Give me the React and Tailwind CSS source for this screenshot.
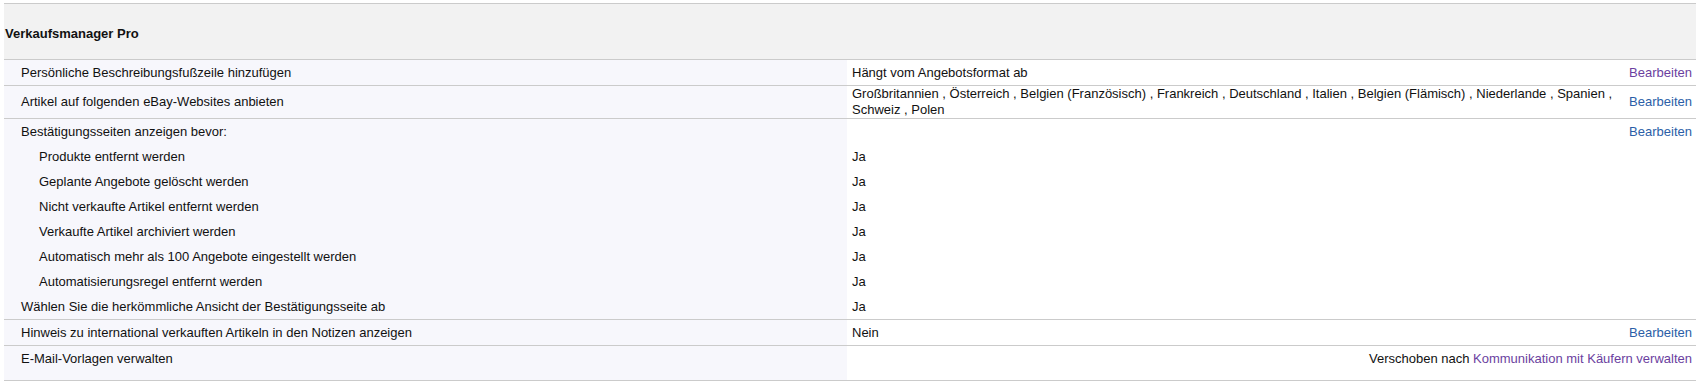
const siteList =
  "Großbritannien , Österreich , Belgien (Französisch) , Frankreich , Deutschland , Italien , Belgien (Flämisch) , Niederlande , Spanien , Schweiz , Polen"

const confirmRows = [
  { label: "Bestätigungsseiten anzeigen bevor:", value: "", edit: true },
  { label: "Produkte entfernt werden", value: "Ja", sub: true },
  { label: "Geplante Angebote gelöscht werden", value: "Ja", sub: true },
  { label: "Nicht verkaufte Artikel entfernt werden", value: "Ja", sub: true },
  { label: "Verkaufte Artikel archiviert werden", value: "Ja", sub: true },
  { label: "Automatisch mehr als 100 Angebote eingestellt werden", value: "Ja", sub: true },
  { label: "Automatisierungsregel entfernt werden", value: "Ja", sub: true },
  { label: "Wählen Sie die herkömmliche Ansicht der Bestätigungsseite ab", value: "Ja" },
]

function Edit({ visited }) {
  return (
    <a href="#" className={visited ? "text-[#6b3fa0]" : "text-[#2b5ea7]"}>
      Bearbeiten
    </a>
  )
}

function Row({ label, value, edit, visited, sub, h = "h-[25px]" }) {
  return (
    <div className="grid grid-cols-[843px_1fr_70px]">
      <div className={`flex items-center bg-[#f7f7fc] ${h} ${sub ? "pl-[35px]" : "pl-[17px]"}`}>{label}</div>
      <div className={`flex items-center pl-[5px] ${h}`}>{value}</div>
      <div className={`flex items-center justify-end pr-[4px] ${h}`}>{edit && <Edit visited={visited} />}</div>
    </div>
  )
}

export default function App() {
  return (
    <div className="w-[1703px] h-[383px] bg-white text-[13px] leading-[16px] text-[#111] font-['Liberation_Sans',Arial,sans-serif]">
      <div className="pt-[3px] pl-[4px] pr-[7px]">
        {/* Header */}
        <div className="border-t border-b border-[#cbcbcb] bg-[#f2f2f2] h-[57px] flex items-center pt-[5px] pl-[1px] font-bold">
          Verkaufsmanager Pro
        </div>

        <div className="border-b border-[#cbcbcb]">
          <Row label="Persönliche Beschreibungsfußzeile hinzufügen" value="Hängt vom Angebotsformat ab" edit visited />
        </div>

        <div className="border-b border-[#cbcbcb]">
          <Row label="Artikel auf folgenden eBay-Websites anbieten" value={siteList} edit h="h-[32px]" />
        </div>

        <div className="border-b border-[#cbcbcb]">
          {confirmRows.map((r) => (
            <Row key={r.label} {...r} />
          ))}
        </div>

        <div className="border-b border-[#cbcbcb]">
          <Row label="Hinweis zu international verkauften Artikeln in den Notizen anzeigen" value="Nein" edit />
        </div>

        <div className="border-b border-[#cbcbcb] grid grid-cols-[843px_1fr]">
          <div className="bg-[#f7f7fc] h-[34px] pl-[17px] pt-[5px]">E-Mail-Vorlagen verwalten</div>
          <div className="h-[34px] pt-[5px] pr-[4px] text-right">
            Verschoben nach{" "}
            <a href="#" className="text-[#6b3fa0]">
              Kommunikation mit Käufern verwalten
            </a>
          </div>
        </div>
      </div>
    </div>
  )
}
